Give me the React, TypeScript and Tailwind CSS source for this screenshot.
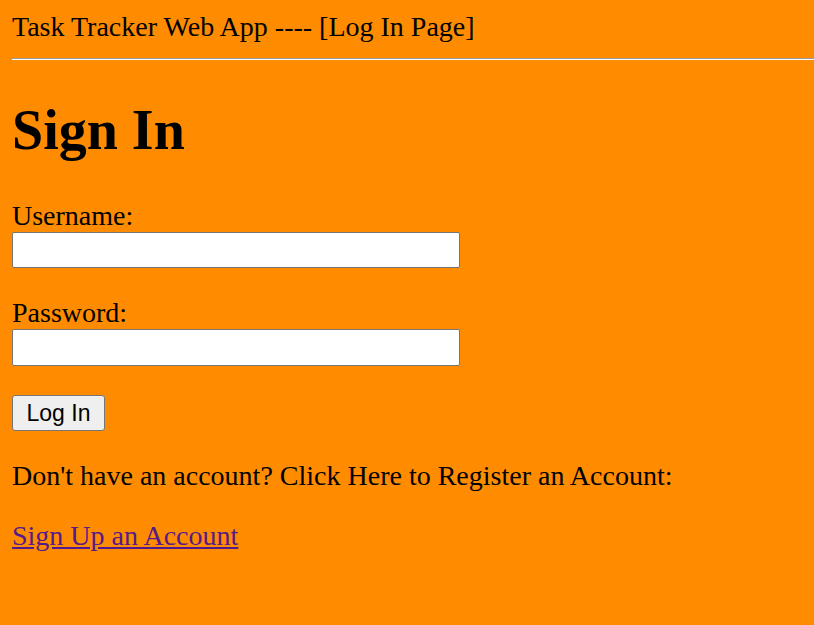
import React from 'react';

const App = () => {
  return (
    <div className="min-h-screen bg-[#ff8c00] text-black text-[28px] leading-[32px] font-['Liberation_Serif','Times_New_Roman',serif]">
      {/* Page header */}
      <div className="pt-[11px] pl-[12px]">Task Tracker Web App ---- [Log In Page]</div>
      <hr className="mt-[15px] ml-[12px] h-0 border-t border-b border-t-[#9a9a9a] border-b-white" />

      <div className="px-[12px]">
        <h1 className="mt-[38px] text-[56px] leading-[64px] font-bold">Sign In</h1>

        <form onSubmit={(e) => e.preventDefault()}>
          <label htmlFor="username" className="block mt-[38px]">Username:</label>
          <input
            id="username"
            type="text"
            className="block w-[448px] h-[36px] bg-white border border-[#767676] rounded-[2px] px-1 text-[23px] font-['Liberation_Sans',Arial,sans-serif]"
          />

          <label htmlFor="password" className="block mt-[29px]">Password:</label>
          <input
            id="password"
            type="password"
            className="block w-[448px] h-[37px] bg-white border border-[#767676] rounded-[2px] px-1 text-[23px] font-['Liberation_Sans',Arial,sans-serif]"
          />

          <button
            type="submit"
            className="block mt-[29px] w-[93px] h-[36px] bg-[#efefef] border border-[#767676] rounded-[3px] text-[23px] leading-none font-['Liberation_Sans',Arial,sans-serif] text-black"
          >
            Log In
          </button>
        </form>

        <p className="mt-[29px]">Don't have an account? Click Here to Register an Account:</p>
        <a href="#" className="inline-block mt-[28px] text-[#551a8b] underline">Sign Up an Account</a>
      </div>
    </div>
  );
};

export default App;
